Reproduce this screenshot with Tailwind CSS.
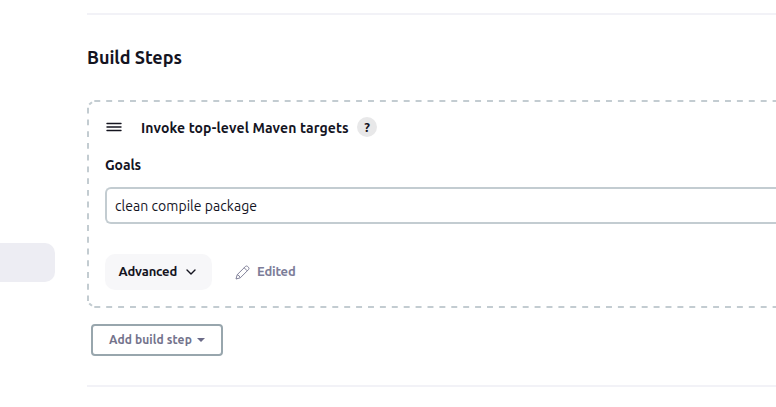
<!DOCTYPE html>
<html lang="en">
<head>
<meta charset="utf-8">
<title>Build Steps</title>
<script src="https://cdn.jsdelivr.net/npm/@tailwindcss/browser@4"></script>
</head>
<body class="w-[776px] h-[407px] overflow-hidden bg-white flex font-[Ubuntu,'Noto_Sans',sans-serif] text-[#14141f] whitespace-nowrap">
  <aside class="w-[87px] shrink-0 pt-[243px]">
    <div class="w-[55px] h-[39px] rounded-r-[10px] bg-[#ededf3]"></div>
  </aside>
  <main class="w-[689px] shrink-0 pt-[13px] overflow-hidden">
    <hr class="border-0 h-[2px] bg-[#f2f2f7]">
    <h2 class="mt-[30px] h-[25px] leading-[25px] text-[18px] font-semibold tracking-[-0.04px]">Build Steps</h2>
    <section class="relative mt-[30px] h-[208px] pl-[18px] pt-[17px]">
      <svg class="absolute left-0 top-0 w-[689px] h-[208px]" fill="none" stroke="#c3ccd1" stroke-width="2">
        <path d="M7.3 1H689M7.3 207H689" stroke-dasharray="5.95 5.95"/>
        <path d="M1 7.7V201" stroke-dasharray="5.87 5.87"/>
        <path d="M2.2 4.6L5 2.2M2.2 203.4L5 205.8"/>
      </svg>
      <div class="flex items-center h-5">
        <svg class="w-4 h-4 ml-px" viewBox="0 0 16 16" fill="none" stroke="#14141f" stroke-width="1.4" stroke-linecap="round"><path d="M1 4.5h14M1 8h14M1 11.5h14"/></svg>
        <h3 class="ml-[19px] pt-0.5 w-[208px] text-[14px] leading-5 font-semibold tracking-[0.12px]">Invoke top-level Maven targets</h3>
        <span class="ml-2 w-5 h-5 rounded-full bg-[#e8e8e9] text-[13px] leading-5 text-center font-semibold">?</span>
      </div>
      <label for="goals" class="block mt-[18px] h-5 leading-5 text-[14px] font-semibold tracking-[-0.1px]">Goals</label>
      <div id="goals" class="mt-[12px] h-[37px] border-2 border-r-0 border-[#c3ccd1] rounded-l-[6px] pl-2 leading-[35px] text-[14px] tracking-[0.04px]">clean compile package</div>
      <div class="mt-[30px] h-9 flex items-center">
        <button class="w-[107px] h-9 rounded-[10px] bg-[#f7f7f9] pl-[13.5px] flex items-center">
          <span class="w-[58.5px] pb-px text-left text-[13px] font-semibold tracking-[-0.15px]">Advanced</span>
          <svg class="ml-2 w-3 h-3" viewBox="0 0 12 12" fill="none" stroke="#14141f" stroke-width="1.4" stroke-linecap="round" stroke-linejoin="round"><path d="M2 4l4 4 4-4"/></svg>
        </button>
        <svg class="ml-[23px] w-[15px] h-[15px]" viewBox="0 0 15 15" fill="none" stroke="#74748f" stroke-width="0.9" stroke-linejoin="round"><path d="M1 14l1.2-4.3 8.2-8.2q1.1-1 2.3 0l.8.8q1 1.2 0 2.3l-8.2 8.2zM2.3 9.8q2.2.5 2.8 2.8M9.2 2.8l3 3"/></svg>
        <span class="ml-[7px] pb-px text-[13px] font-semibold tracking-[-0.2px] text-[#7d7d99]">Edited</span>
      </div>
    </section>
    <button class="ml-1 mt-4 w-[132px] h-8 border-2 border-[#98a6ad] rounded-[4px] pl-4 flex items-center text-[#73738c]">
      <span class="w-[83px] text-left text-[12px] font-semibold tracking-[0.1px]">Add build step</span>
      <svg class="ml-[5px] w-2 h-1" viewBox="0 0 8 4" fill="#6b6b88"><path d="M0 0h8L4 4z"/></svg>
    </button>
    <hr class="mt-[29px] border-0 h-[2px] bg-[#f2f2f7]">
  </main>
</body>
</html>
